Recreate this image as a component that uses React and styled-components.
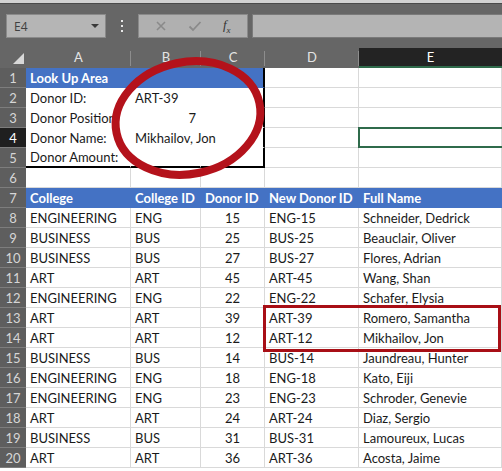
import React from "react";
import styled, { createGlobalStyle, css } from "styled-components";

const Global = createGlobalStyle`
  html, body { margin: 0; padding: 0; background: #ffffff; }
  body { width: 502px; height: 471px; overflow: hidden; font-family: Lato, "Open Sans", sans-serif; }
`;

const Page = styled.div`
  position: relative;
  width: 502px;
  height: 471px;
  overflow: hidden;
  background: #ffffff;
`;

const TopStrip = styled.div`
  height: 3px;
  background: #d2d2d2;
  border-bottom: 1px solid #4a4a4a;
`;

const Toolbar = styled.div`
  height: 44px;
  background: #666666;
  display: flex;
  align-items: flex-start;
  padding-top: 10px;
  box-sizing: border-box;
  padding-left: 6px;
`;

const NameBox = styled.div`
  width: 100px;
  height: 24px;
  box-sizing: border-box;
  background: #b5b5b5;
  border: 1px solid #8a8a8a;
  display: flex;
  align-items: center;
  justify-content: space-between;
  padding: 0 6px 0 7px;
  font-family: "Open Sans", sans-serif;
  font-size: 12px;
  color: #404040;
`;

const Caret = styled.span`
  width: 0;
  height: 0;
  border-left: 4px solid transparent;
  border-right: 4px solid transparent;
  border-top: 4px solid #3a3a3a;
`;

const Dots = styled.div`
  width: 32px;
  height: 24px;
  display: flex;
  flex-direction: column;
  align-items: center;
  justify-content: center;
  gap: 3px;
  & > span {
    width: 2px;
    height: 2px;
    background: #e8e8e8;
  }
`;

const BtnGroup = styled.div`
  width: 110px;
  height: 24px;
  box-sizing: border-box;
  background: #b0b0b0;
  border: 1px solid #8a8a8a;
  display: flex;
  align-items: center;
  justify-content: space-around;
  padding: 0 6px;
`;

const Fx = styled.span`
  font-family: "Liberation Serif", serif;
  font-style: italic;
  font-size: 13px;
  color: #333;
  & sub { font-size: 9px; }
`;

const FormulaInput = styled.div`
  flex: 1;
  height: 24px;
  margin-left: 4px;
  box-sizing: border-box;
  background: #b4b4b4;
  border: 1px solid #7a7a7a;
  border-right: none;
`;

const Grid = styled.div`
  display: grid;
  grid-template-columns: 26px 105px 70px 64px 94px 143px;
  grid-auto-rows: 20px;
`;

const Corner = styled.div`
  background: #666666;
  display: flex;
  align-items: flex-end;
  justify-content: flex-end;
  padding: 0 2px 4px 0;
  & > span {
    width: 0;
    height: 0;
    border-left: 11px solid transparent;
    border-bottom: 11px solid #d8d8d8;
  }
`;

const ColHead = styled.div`
  background: ${(p) => (p.$active ? "#232323" : "#666666")};
  color: ${(p) => (p.$active ? "#ffffff" : "#e4e4e4")};
  font-size: 13px;
  display: flex;
  align-items: center;
  justify-content: center;
  box-sizing: border-box;
  position: relative;
  border-bottom: 2px solid ${(p) => (p.$active ? "#2f6b4b" : "#666666")};
  &::after {
    content: "";
    position: absolute;
    right: 0;
    top: 3px;
    bottom: 0;
    width: 1px;
    background: ${(p) => (p.$last ? "transparent" : "#8d8d8d")};
  }
`;

const RowHead = styled.div`
  background: ${(p) => (p.$active ? "#1f1f1f" : "#5e5e5e")};
  color: ${(p) => (p.$active ? "#ffffff" : "#d6d6d6")};
  font-size: 13px;
  display: flex;
  align-items: center;
  justify-content: center;
  box-sizing: border-box;
  border-bottom: 1px solid #7d7d7d;
`;

const Cell = styled.div`
  box-sizing: border-box;
  font-size: 13px;
  color: #1a1a1a;
  display: flex;
  align-items: center;
  padding: 0 4px;
  white-space: nowrap;
  overflow: visible;
  position: relative;
  border-right: 1px solid ${(p) => (p.$noGrid ? "transparent" : "#d9d9d9")};
  border-bottom: 1px solid ${(p) => (p.$noGrid ? "transparent" : "#d9d9d9")};
  justify-content: ${(p) =>
    p.$align === "center" ? "center" : p.$align === "right" ? "flex-end" : "flex-start"};
  ${(p) =>
    p.$head &&
    css`
      background: #4472c4;
      color: #ffffff;
      font-weight: 700;
      border-right-color: #4472c4;
      border-bottom-color: #4472c4;
    `}
  ${(p) =>
    p.$boxRight &&
    css`
      border-right: 2px solid #000000;
    `}
  ${(p) =>
    p.$boxBottom &&
    css`
      border-bottom: 2px solid #000000;
    `}
  ${(p) =>
    p.$selected &&
    css`
      &::after {
        content: "";
        position: absolute;
        left: -1px;
        top: -1px;
        right: -3px;
        bottom: -1px;
        border: 2px solid #2f6b4b;
      }
    `}
`;

const Overlay = styled.svg`
  position: absolute;
  left: 0;
  top: 0;
  pointer-events: none;
`;

const data = [
  ["ENGINEERING", "ENG", 15, "ENG-15", "Schneider, Dedrick"],
  ["BUSINESS", "BUS", 25, "BUS-25", "Beauclair, Oliver"],
  ["BUSINESS", "BUS", 27, "BUS-27", "Flores, Adrian"],
  ["ART", "ART", 45, "ART-45", "Wang, Shan"],
  ["ENGINEERING", "ENG", 22, "ENG-22", "Schafer, Elysia"],
  ["ART", "ART", 39, "ART-39", "Romero, Samantha"],
  ["ART", "ART", 12, "ART-12", "Mikhailov, Jon"],
  ["BUSINESS", "BUS", 14, "BUS-14", "Jaundreau, Hunter"],
  ["ENGINEERING", "ENG", 18, "ENG-18", "Kato, Eiji"],
  ["ENGINEERING", "ENG", 23, "ENG-23", "Schroder, Genevie"],
  ["ART", "ART", 24, "ART-24", "Diaz, Sergio"],
  ["BUSINESS", "BUS", 31, "BUS-31", "Lamoureux, Lucas"],
  ["ART", "ART", 36, "ART-36", "Acosta, Jaime"],
];

const lookup = [
  ["Donor ID:", "ART-39", null],
  ["Donor Position:", "7", "right"],
  ["Donor Name:", "Mikhailov, Jon", null],
  ["Donor Amount:", "", null],
];

export default function App() {
  return (
    <Page>
      <Global />
      <TopStrip />
      <Toolbar>
        <NameBox>
          <span>E4</span>
          <Caret />
        </NameBox>
        <Dots>
          <span />
          <span />
          <span />
        </Dots>
        <BtnGroup>
          <svg width="12" height="12" viewBox="0 0 12 12">
            <path d="M2 2 L10 10 M10 2 L2 10" stroke="#8a8a8a" strokeWidth="1.6" />
          </svg>
          <svg width="14" height="12" viewBox="0 0 14 12">
            <path d="M1.5 6.5 L5 10 L12.5 2" stroke="#8a8a8a" strokeWidth="1.8" fill="none" />
          </svg>
          <Fx>
            f<sub>x</sub>
          </Fx>
        </BtnGroup>
        <FormulaInput />
      </Toolbar>
      <Grid>
        <Corner>
          <span />
        </Corner>
        {["A", "B", "C", "D", "E"].map((l) => (
          <ColHead key={l} $active={l === "E"} $last={l === "E"}>
            {l}
          </ColHead>
        ))}

        <RowHead>1</RowHead>
        <Cell $head>Look Up Area</Cell>
        <Cell $head />
        <Cell $head $boxRight />
        <Cell />
        <Cell />

        {lookup.map(([label, val, align], i) => {
          const n = i + 2;
          const last = n === 5;
          return (
            <React.Fragment key={n}>
              <RowHead $active={n === 4}>{n}</RowHead>
              <Cell $noGrid $boxBottom={last}>{label}</Cell>
              <Cell $noGrid $boxBottom={last} $align={align === "right" ? "right" : "left"}>
                {val}
              </Cell>
              <Cell $noGrid $boxRight $boxBottom={last} />
              <Cell />
              <Cell $selected={n === 4} />
            </React.Fragment>
          );
        })}

        <RowHead>6</RowHead>
        <Cell />
        <Cell />
        <Cell />
        <Cell />
        <Cell />

        <RowHead>7</RowHead>
        <Cell $head>College</Cell>
        <Cell $head>College ID</Cell>
        <Cell $head>Donor ID</Cell>
        <Cell $head>New Donor ID</Cell>
        <Cell $head>Full Name</Cell>

        {data.map((r, i) => (
          <React.Fragment key={i}>
            <RowHead>{i + 8}</RowHead>
            <Cell>{r[0]}</Cell>
            <Cell>{r[1]}</Cell>
            <Cell $align="center">{r[2]}</Cell>
            <Cell>{r[3]}</Cell>
            <Cell>{r[4]}</Cell>
          </React.Fragment>
        ))}
      </Grid>
      <Overlay width="502" height="471" viewBox="0 0 502 471">
        <ellipse
          cx="188"
          cy="118"
          rx="73"
          ry="56"
          transform="rotate(-12 188 118)"
          fill="none"
          stroke="#b4121b"
          strokeWidth="8"
        />
        <rect
          x="264.5"
          y="306.5"
          width="235"
          height="44"
          fill="none"
          stroke="#a80f16"
          strokeWidth="3"
        />
      </Overlay>
    </Page>
  );
}
